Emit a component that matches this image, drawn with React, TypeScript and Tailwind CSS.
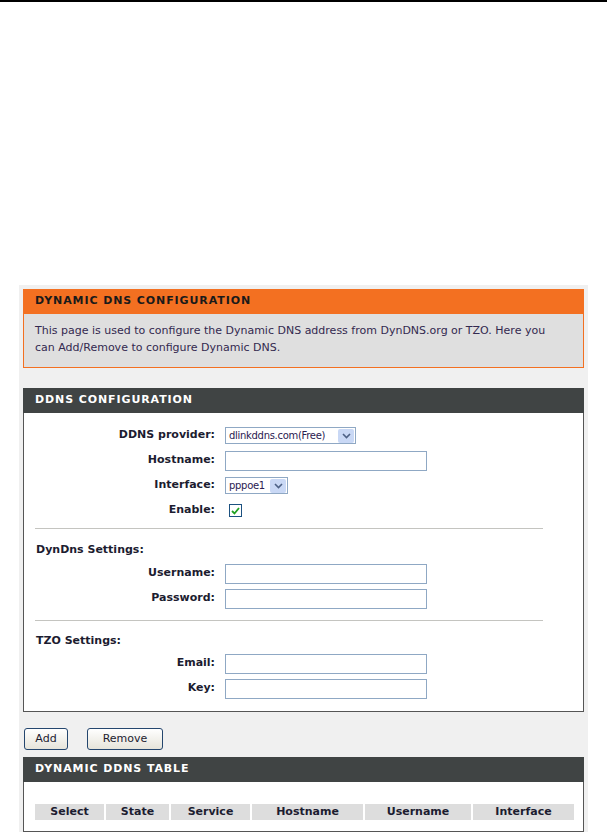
import React from 'react';

const font = "font-['DejaVu_Sans',Verdana,sans-serif]";

const TextInput = () => <div className="w-[202px] h-[20px] bg-white border border-[#8fa8c4]" />;

const SelectBox = ({ value, width }: { value: string; width: string }) => (
    <div className={`${width} h-[17px] bg-white border border-[#8fa8c4] flex items-center justify-between pl-[3px] pr-[1px]`}>
        <span className="text-[10px] text-[#2a2050] tracking-[-0.3px] leading-none">{value}</span>
        <span className="w-[16px] h-[14px] bg-[#c9d8f5] rounded-[2px] flex items-center justify-center">
            <svg width="9" height="6" viewBox="0 0 9 6">
                <path d="M1 1 L4.5 4.5 L8 1" fill="none" stroke="#4d6185" strokeWidth="1.6" />
            </svg>
        </span>
    </div>
);

const FormRow = ({ label, children }: { label: string; children: React.ReactNode }) => (
    <div className="flex items-center h-[25px]">
        <div className="w-[191px] text-right text-[11px] font-bold text-[#1c1c30]">{label}</div>
        <div className="ml-[10px] flex items-center">{children}</div>
    </div>
);

const Header = ({ title, dark }: { title: string; dark?: boolean }) => (
    <div
        className={`h-[25px] flex items-center pl-[12px] text-[11px] font-bold tracking-[0.9px] ${
            dark ? 'bg-[#404444] text-white' : 'bg-[#f37021] text-[#1a1a1a]'
        }`}
    >
        {title}
    </div>
);

const Button = ({ label, width }: { label: string; width: string }) => (
    <button
        className={`${width} h-[22px] rounded-[3px] border border-[#24466e] bg-gradient-to-b from-white to-[#e6e4da] text-[11px] text-[#1c1c30] flex items-center justify-center`}
    >
        {label}
    </button>
);

const columns = [
    { name: 'Select', w: 'w-[69px]' },
    { name: 'State', w: 'w-[63px]' },
    { name: 'Service', w: 'w-[79px]' },
    { name: 'Hostname', w: 'w-[111px]' },
    { name: 'Username', w: 'w-[106px]' },
    { name: 'Interface', w: 'w-[101px]' },
];

export default function App() {
    return (
        <div className={`w-[607px] h-[832px] bg-white overflow-hidden ${font}`}>
            <div className="h-[2px] bg-black" />

            <div className="mt-[283px] mx-[19px] bg-[#f0f0f0] px-[4px] pt-[4px] pb-[20px]">
                {/* Intro */}
                <Header title="DYNAMIC DNS CONFIGURATION" />
                <div className="h-[54px] bg-[#dfdfdf] border border-t-0 border-[#f37021] pl-[11px] pr-[20px] pt-[8px] text-[11px] leading-[17px] text-[#33294f]">
                    This page is used to configure the Dynamic DNS address from DynDNS.org or TZO. Here you can Add/Remove to configure Dynamic DNS.
                </div>

                {/* DDNS configuration */}
                <div className="mt-[20px]">
                    <Header title="DDNS CONFIGURATION" dark />
                    <div className="bg-white border border-t-0 border-[#555] pt-[10px] pb-[10px]">
                        <FormRow label="DDNS provider:">
                            <SelectBox value="dlinkddns.com(Free)" width="w-[131px]" />
                        </FormRow>
                        <FormRow label="Hostname:">
                            <TextInput />
                        </FormRow>
                        <FormRow label="Interface:">
                            <SelectBox value="pppoe1" width="w-[63px]" />
                        </FormRow>
                        <FormRow label="Enable:">
                            <div className="ml-[4px] w-[13px] h-[13px] border border-[#1c5180] bg-white flex items-center justify-center">
                                <svg width="9" height="8" viewBox="0 0 9 8">
                                    <path d="M1 4 L3.5 6.5 L8 1" fill="none" stroke="#21a121" strokeWidth="1.8" />
                                </svg>
                            </div>
                        </FormRow>

                        <div className="mt-[5px] ml-[11px] mr-[40px] h-[1px] bg-[#c4c4c0]" />
                        <div className="mt-[12px] ml-[12px] h-[18px] flex items-center text-[11px] font-bold text-[#1c1c30]">DynDns Settings:</div>
                        <div className="mt-[2px]">
                            <FormRow label="Username:">
                                <TextInput />
                            </FormRow>
                            <FormRow label="Password:">
                                <TextInput />
                            </FormRow>
                        </div>

                        <div className="mt-[9px] ml-[11px] mr-[40px] h-[1px] bg-[#c4c4c0]" />
                        <div className="mt-[11px] ml-[12px] h-[18px] flex items-center text-[11px] font-bold text-[#1c1c30]">TZO Settings:</div>
                        <div className="mt-[1px]">
                            <FormRow label="Email:">
                                <TextInput />
                            </FormRow>
                            <FormRow label="Key:">
                                <TextInput />
                            </FormRow>
                        </div>
                    </div>
                </div>

                {/* Actions */}
                <div className="mt-[16px] flex items-center gap-[19px] pl-[1px]">
                    <Button label="Add" width="w-[44px]" />
                    <Button label="Remove" width="w-[76px]" />
                </div>

                {/* Table */}
                <div className="mt-[7px]">
                    <Header title="DYNAMIC DDNS TABLE" dark />
                    <div className="bg-white border border-t-0 border-[#555] pt-[22px] pb-[11px] pl-[11px]">
                        <div className="flex gap-[2px]">
                            {columns.map((c) => (
                                <div
                                    key={c.name}
                                    className={`${c.w} h-[16px] bg-[#dddddd] flex items-center justify-center text-[11px] font-bold text-[#1c1c30]`}
                                >
                                    {c.name}
                                </div>
                            ))}
                        </div>
                    </div>
                </div>
            </div>
        </div>
    );
}
